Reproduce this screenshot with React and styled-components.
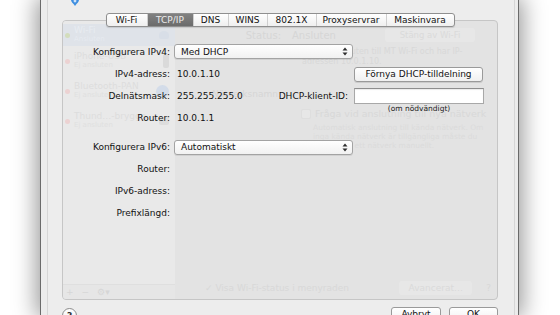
import React from 'react';
import styled, { createGlobalStyle } from 'styled-components';

const GlobalStyle = createGlobalStyle`
  html, body {
    margin: 0;
    padding: 0;
    background: #ffffff;
    overflow: hidden;
  }
`;

const FONT = `"DejaVu Sans", "Liberation Sans", sans-serif`;

const Page = styled.div`
  display: flex;
  width: 560px;
  height: 315px;
  background: #ffffff;
  overflow: hidden;
  font-family: ${FONT};
  font-size: 9px;
  color: #111;
`;

const Window = styled.div`
  display: flex;
  margin-left: 40px;
  width: 479px;
  height: 315px;
  box-sizing: border-box;
  background: #ececec;
  border-left: 1px solid #6a6a6a;
  border-right: 1px solid #6a6a6a;
  box-shadow: 0 0 22px 3px rgba(0, 0, 0, 0.42);
  overflow: hidden;
`;

const Sheet = styled.div`
  display: flex;
  flex-direction: column;
  margin-left: 6px;
  width: 468px;
  box-sizing: border-box;
  padding: 0 16px 0 14px;
  background: #ededed;
  border-left: 1px solid #d6d6d6;
  border-right: 1px solid #d6d6d6;

  & > * {
    flex-shrink: 0;
  }
`;

const TopStrip = styled.div`
  height: 13px;
  display: flex;
  align-items: flex-start;
  padding-left: 9px;
`;

const TabStrip = styled.div`
  position: relative;
  z-index: 2;
  align-self: center;
  display: flex;
  height: 14px;
  box-sizing: border-box;
  border: 1px solid #8f8f8f;
  border-radius: 3px;
  background: linear-gradient(#ffffff, #efefef);
  box-shadow: 0 1px 1px rgba(0, 0, 0, 0.12);
  overflow: hidden;
`;

const Tab = styled.div`
  width: ${(p) => p.$w}px;
  box-sizing: border-box;
  display: flex;
  align-items: center;
  justify-content: center;
  line-height: 12px;
  border-left: ${(p) => (p.$first ? 'none' : '1px solid #cfcfcf')};
  background: ${(p) => (p.$active ? 'linear-gradient(#818181, #6b6b6b)' : 'transparent')};
  color: ${(p) => (p.$active ? '#ececec' : '#111')};
`;

const Box = styled.div`
  position: relative;
  margin-top: -7px;
  height: 280px;
  box-sizing: border-box;
  border: 1px solid #c6c6c6;
  border-radius: 4px;
  background: #e3e3e3;
  overflow: hidden;
`;

/* faded window behind the sheet */
const Ghost = styled.div`
  position: absolute;
  inset: 0;
  display: grid;
  grid-template-columns: 112px 1fr;
  grid-template-rows: 1fr 15px;
  color: #d8d8d8;
  font-size: 8.5px;
`;

const GhostList = styled.div`
  background: #e9e9e9;
  padding-top: 3px;
  display: flex;
  flex-direction: column;
`;

const GhostItem = styled.div`
  height: ${(p) => p.$h}px;
  display: flex;
  align-items: center;
  padding-left: 2px;
  padding-right: 6px;
  gap: 4px;
  background: ${(p) => (p.$sel ? '#dfe3e9' : 'transparent')};
`;

const GhostDot = styled.span`
  width: 5px;
  height: 5px;
  border-radius: 50%;
  background: ${(p) => p.$c};
  flex: none;
`;

const GhostNames = styled.div`
  flex: 1;
  display: flex;
  flex-direction: column;
  line-height: 9px;
  font-size: 9px;
  color: ${(p) => (p.$sel ? '#e8ecf1' : '#dddddd')};
`;

const GhostSub = styled.span`
  font-size: 7px;
  color: ${(p) => (p.$sel ? '#e6eaf0' : '#e0e0e0')};
`;

const GhostIcon = styled.span`
  width: ${(p) => p.$w}px;
  height: ${(p) => p.$h}px;
  border-radius: ${(p) => p.$r};
  background: ${(p) => p.$c};
  flex: none;
`;

const GhostMain = styled.div`
  display: flex;
  flex-direction: column;
  padding-top: 7px;
`;

const GhostRow = styled.div`
  display: grid;
  grid-template-columns: 117px auto 1fr;
  align-items: center;
  height: ${(p) => p.$h}px;
  margin-top: ${(p) => p.$mt || 0}px;
`;

const GhostLabel = styled.span`
  text-align: ${(p) => (p.$left ? 'left' : 'right')};
  padding-right: ${(p) => (p.$left ? 0 : 11)}px;
  font-size: ${(p) => p.$fs || 9}px;
  color: #d6d6d6;
`;

const GhostButton = styled.span`
  justify-self: end;
  margin-right: ${(p) => p.$mr}px;
  width: ${(p) => p.$w}px;
  height: 14px;
  border-radius: 3px;
  background: #e7e7e7;
  display: flex;
  align-items: center;
  justify-content: center;
  color: #dadada;
`;

const GhostText = styled.div`
  padding-left: ${(p) => p.$pl}px;
  line-height: ${(p) => p.$lh}px;
  font-size: ${(p) => p.$fs}px;
  margin-top: ${(p) => p.$mt || 0}px;
  color: ${(p) => p.$c || '#d8d8d8'};
  display: flex;
  align-items: center;
  gap: 4px;
`;

const GhostCheck = styled.span`
  width: 8px;
  height: 8px;
  border-radius: 2px;
  border: 1px solid #dedede;
  background: #e7e7e7;
  margin-left: -12px;
`;

const GhostListBar = styled.div`
  display: flex;
  align-items: center;
  gap: 8px;
  padding-left: 3px;
  background: #e6e6e6;
  border-top: 1px solid #dfdfdf;
  color: #d6d6d6;
  font-size: 9px;
`;

const GhostBottom = styled.div`
  display: flex;
  align-items: center;
  padding-left: 30px;
  padding-right: 6px;
  color: #d8d8d8;
  font-size: 9px;
  margin-top: -7px;
`;

/* the TCP/IP form */
const Form = styled.div`
  position: relative;
  z-index: 1;
  display: flex;
  flex-direction: column;
  padding-top: 19px;
`;

const Row = styled.div`
  display: grid;
  grid-template-columns: 111px 100px 80px 130px;
  align-items: center;
  height: ${(p) => p.$h || 22}px;
  margin-top: ${(p) => p.$mt || 0}px;
`;

const Label = styled.span`
  grid-column: ${(p) => p.$col || 1};
  text-align: right;
  padding-right: ${(p) => (p.$col ? 6 : 4)}px;
  white-space: nowrap;
  color: #111;
`;

const Value = styled.span`
  grid-column: 2;
  padding-left: 3px;
  color: #111;
`;

const Popup = styled.div`
  grid-column: 2 / span 2;
  width: 179px;
  height: 15px;
  box-sizing: border-box;
  display: flex;
  align-items: center;
  justify-content: space-between;
  padding: 0 4px 0 6px;
  border: 1px solid #a3a3a3;
  border-radius: 3px;
  background: linear-gradient(#ffffff, #f1f1f1);
  box-shadow: 0 1px 0 rgba(0, 0, 0, 0.08);
`;

const PushButton = styled.div`
  grid-column: ${(p) => p.$col || 'auto'};
  width: ${(p) => p.$w}px;
  height: ${(p) => p.$h || 15}px;
  box-sizing: border-box;
  display: flex;
  align-items: ${(p) => (p.$top ? 'flex-start' : 'center')};
  justify-content: center;
  padding-top: ${(p) => (p.$top ? 1 : 0)}px;
  border: 1px solid #9a9a9a;
  border-radius: 3px;
  background: linear-gradient(#ffffff, #f0f0f0);
  box-shadow: 0 1px 0 rgba(0, 0, 0, 0.1);
  color: #111;
`;

const TextField = styled.div`
  grid-column: 4;
  width: 130px;
  height: 16px;
  box-sizing: border-box;
  border: 1px solid #a8a8a8;
  border-top-color: #8e8e8e;
  background: #ffffff;
  box-shadow: inset 0 1px 1px rgba(0, 0, 0, 0.08);
`;

const Caption = styled.span`
  grid-column: 4;
  align-self: start;
  margin-top: -3px;
  text-align: center;
  font-size: 7.5px;
  color: #222;
`;

const BottomRow = styled.div`
  display: flex;
  align-items: flex-start;
  margin-top: 7px;
  gap: 8px;
`;

const HelpButton = styled.div`
  width: 15px;
  height: 15px;
  box-sizing: border-box;
  border-radius: 50%;
  border: 1px solid #8c8c8c;
  background: linear-gradient(#ffffff, #eeeeee);
  display: flex;
  align-items: center;
  justify-content: center;
  font-weight: bold;
  font-size: 9px;
  color: #333;
  margin-top: 1px;
  margin-right: auto;
`;

const Arrows = () => (
  <svg width="6" height="9" viewBox="0 0 6 9">
    <path d="M3 0.5 L5.5 3.5 H0.5 Z" fill="#2e2e2e" />
    <path d="M3 8.5 L5.5 5.5 H0.5 Z" fill="#2e2e2e" />
  </svg>
);

const PinTip = () => (
  <svg width="8" height="6" viewBox="0 0 8 6">
    <path d="M0 0 H8 C8 2 6 3 4 6 C2 3 0 2 0 0 Z" fill="#3f8fe0" />
    <circle cx="4" cy="1" r="1.4" fill="#cfe2f7" />
  </svg>
);

const tabs = [
  ['Wi-Fi', 40],
  ['TCP/IP', 46],
  ['DNS', 35],
  ['WINS', 39],
  ['802.1X', 49],
  ['Proxyservrar', 70],
  ['Maskinvara', 68],
];

const services = [
  { name: 'Wi-Fi', sub: 'Ansluten', dot: '#d3ddbc', h: 22, sel: true, icon: [10, 8, '50% 50% 2px 2px', '#d8dee7'] },
  { name: 'iPhone-USB', sub: 'Ej ansluten', dot: '#ecd2d2', h: 30, icon: [6, 14, '2px', '#dadada'] },
  { name: 'Bluetooth-PAN', sub: 'Ej ansluten', dot: '#ecd2d2', h: 30, icon: [13, 13, '50%', '#d3dce9'] },
  { name: 'Thund…-brygga', sub: 'Ej ansluten', dot: '#ecd2d2', h: 30, icon: [10, 8, '2px', '#dddddd'] },
];

export default function App() {
  return (
    <>
      <GlobalStyle />
      <Page>
        <Window>
          <Sheet>
            <TopStrip>
              <PinTip />
            </TopStrip>

            <TabStrip>
              {tabs.map(([name, w], i) => (
                <Tab key={name} $w={w} $first={i === 0} $active={name === 'TCP/IP'}>
                  {name}
                </Tab>
              ))}
            </TabStrip>

            <Box>
              <Ghost>
                <GhostList>
                  {services.map((s) => (
                    <GhostItem key={s.name} $h={s.h} $sel={s.sel}>
                      <GhostDot $c={s.dot} />
                      <GhostNames $sel={s.sel}>
                        <span>{s.name}</span>
                        <GhostSub $sel={s.sel}>{s.sub}</GhostSub>
                      </GhostNames>
                      <GhostIcon $w={s.icon[0]} $h={s.icon[1]} $r={s.icon[2]} $c={s.icon[3]} />
                    </GhostItem>
                  ))}
                </GhostList>

                <GhostMain>
                  <GhostRow $h={14}>
                    <GhostLabel $fs={10}>Status:</GhostLabel>
                    <GhostLabel $fs={10} $left>
                      Ansluten
                    </GhostLabel>
                    <GhostButton $w={90} $mr={22}>Stäng av Wi-Fi</GhostButton>
                  </GhostRow>
                  <GhostText $pl={127} $lh={10} $fs={8} $mt={5}>
                    Wi-Fi är ansluten till MT Wi-Fi och har IP-
                  </GhostText>
                  <GhostText $pl={127} $lh={10} $fs={8}>
                    adressen 10.0.1.10.
                  </GhostText>
                  <GhostRow $h={14} $mt={20}>
                    <GhostLabel>Nätverksnamn:</GhostLabel>
                    <span />
                    <span />
                  </GhostRow>
                  <GhostText $pl={138} $lh={12} $fs={9.5} $mt={7}>
                    <GhostCheck />
                    Fråga vid anslutning till nya nätverk
                  </GhostText>
                  <GhostText $pl={138} $lh={9} $fs={7.5} $mt={3} $c="#dbdbdb">
                    Automatisk anslutning till kända nätverk. Om
                  </GhostText>
                  <GhostText $pl={138} $lh={9} $fs={7.5} $c="#dbdbdb">
                    inga kända nätverk är tillgängliga måste du
                  </GhostText>
                  <GhostText $pl={138} $lh={9} $fs={7.5} $c="#dbdbdb">
                    ansluta till ett nätverk manuellt.
                  </GhostText>
                </GhostMain>

                <GhostListBar>
                  <span>+</span>
                  <span>−</span>
                  <span>⚙▾</span>
                </GhostListBar>
                <GhostBottom>
                  <span style={{ marginRight: 'auto' }}>✓ Visa Wi-Fi-status i menyraden</span>
                  <GhostButton $w={73} $mr={14}>Avancerat…</GhostButton>
                  <span>?</span>
                </GhostBottom>
              </Ghost>

              <Form>
                <Row $h={23}>
                  <Label>Konfigurera IPv4:</Label>
                  <Popup>
                    <span>Med DHCP</span>
                    <Arrows />
                  </Popup>
                </Row>
                <Row>
                  <Label>IPv4-adress:</Label>
                  <Value>10.0.1.10</Value>
                  <PushButton $col={4} $w={129}>Förnya DHCP-tilldelning</PushButton>
                </Row>
                <Row>
                  <Label>Delnätsmask:</Label>
                  <Value>255.255.255.0</Value>
                  <Label $col={3}>DHCP-klient-ID:</Label>
                  <TextField />
                </Row>
                <Row>
                  <Label>Router:</Label>
                  <Value>10.0.1.1</Value>
                  <Caption>(om nödvändigt)</Caption>
                </Row>
                <Row $mt={7}>
                  <Label>Konfigurera IPv6:</Label>
                  <Popup>
                    <span>Automatiskt</span>
                    <Arrows />
                  </Popup>
                </Row>
                <Row>
                  <Label>Router:</Label>
                </Row>
                <Row>
                  <Label>IPv6-adress:</Label>
                </Row>
                <Row>
                  <Label>Prefixlängd:</Label>
                </Row>
              </Form>
            </Box>

            <BottomRow>
              <HelpButton>?</HelpButton>
              <PushButton $w={50} $h={16} $top>Avbryt</PushButton>
              <PushButton $w={49} $h={16} $top>OK</PushButton>
            </BottomRow>
          </Sheet>
        </Window>
      </Page>
    </>
  );
}
